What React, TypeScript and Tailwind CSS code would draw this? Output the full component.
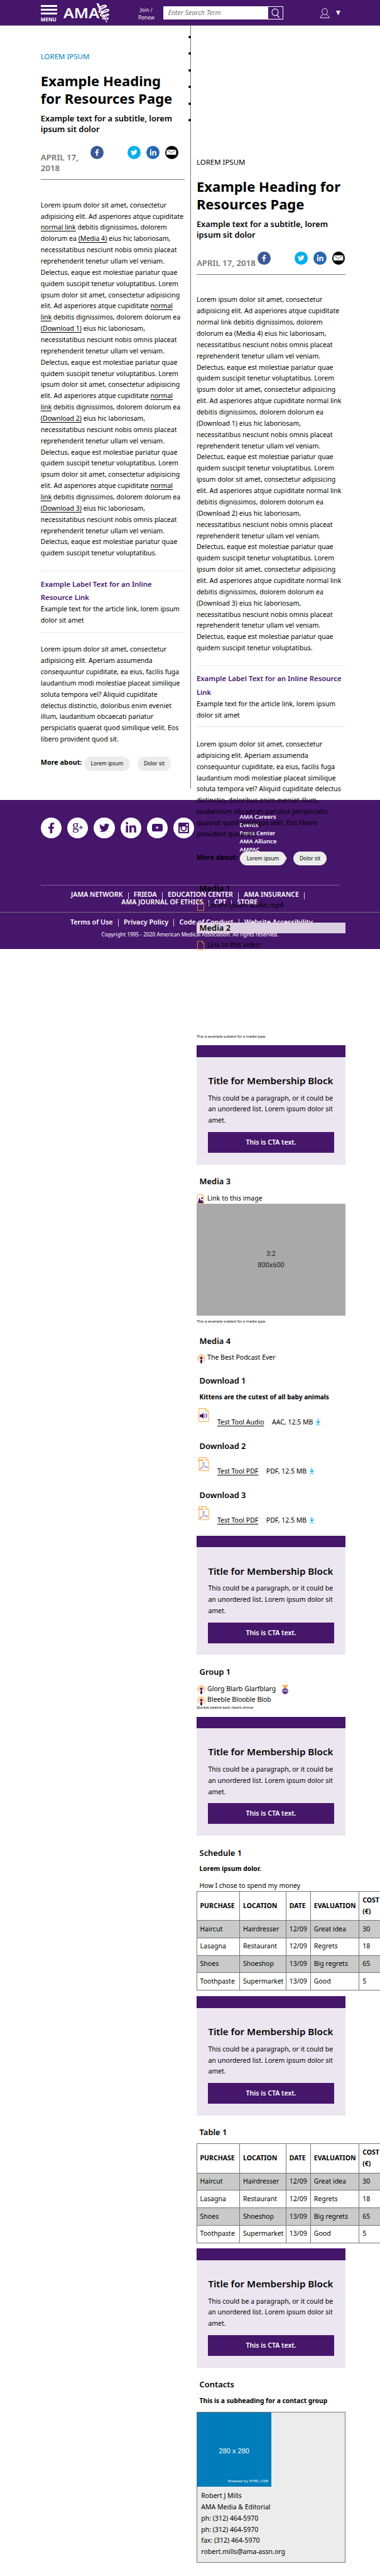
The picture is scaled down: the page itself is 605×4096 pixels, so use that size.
import React from "react";
import { FaFacebookF, FaTwitter, FaLinkedinIn } from "react-icons/fa";

const SHARED = [
  "necessitatibus nesciunt nobis omnis placeat",
  "reprehenderit tenetur ullam vel veniam.",
  "Delectus, eaque est molestiae pariatur quae",
];

function Link({ children }: { children: React.ReactNode }) {
  return <a className="underline decoration-1 underline-offset-[1.5px]">{children}</a>;
}

const LEFT_BODY: React.ReactNode[] = [
  "Lorem ipsum dolor sit amet, consectetur",
  "adipisicing elit. Ad asperiores atque cupiditate",
  <><Link>normal link</Link> debitis dignissimos, dolorem</>,
  <>dolorum ea <Link>(Media 4)</Link> eius hic laboriosam,</>,
  ...SHARED,
  "quidem suscipit tenetur voluptatibus. Lorem",
  ...[1, 2, 3].flatMap((n) => [
    "ipsum dolor sit amet, consectetur adipisicing",
    <>elit. Ad asperiores atque cupiditate <Link>normal</Link></>,
    <><Link>link</Link> debitis dignissimos, dolorem dolorum ea</>,
    <><Link>(Download {n})</Link> eius hic laboriosam,</>,
    ...SHARED,
    n < 3 ? "quidem suscipit tenetur voluptatibus. Lorem" : "quidem suscipit tenetur voluptatibus.",
  ]),
];

const RIGHT_BODY: React.ReactNode[] = [
  "Lorem ipsum dolor sit amet, consectetur",
  "adipisicing elit. Ad asperiores atque cupiditate",
  "normal link debitis dignissimos, dolorem",
  "dolorum ea (Media 4) eius hic laboriosam,",
  ...SHARED,
  "quidem suscipit tenetur voluptatibus. Lorem",
  ...[1, 2, 3].flatMap((n) => [
    "ipsum dolor sit amet, consectetur adipisicing",
    "elit. Ad asperiores atque cupiditate normal link",
    "debitis dignissimos, dolorem dolorum ea",
    `(Download ${n}) eius hic laboriosam,`,
    ...SHARED,
    n < 3 ? "quidem suscipit tenetur voluptatibus. Lorem" : "quidem suscipit tenetur voluptatibus.",
  ]),
];

const LEFT_OUTRO = [
  "Lorem ipsum dolor sit amet, consectetur",
  "adipisicing elit. Aperiam assumenda",
  "consequuntur cupiditate, ea eius, facilis fuga",
  "laudantium modi molestiae placeat similique",
  "soluta tempora vel? Aliquid cupiditate",
  "delectus distinctio, doloribus enim eveniet",
  "illum, laudantium obcaecati pariatur",
  "perspiciatis quaerat quod similique velit. Eos",
  "libero provident quod sit.",
];

const RIGHT_OUTRO = [
  "Lorem ipsum dolor sit amet, consectetur",
  "adipisicing elit. Aperiam assumenda",
  "consequuntur cupiditate, ea eius, facilis fuga",
  "laudantium modi molestiae placeat similique",
  "soluta tempora vel? Aliquid cupiditate delectus",
  "distinctio, doloribus enim eveniet illum,",
  "laudantium obcaecati pariatur perspiciatis",
  "quaerat quod similique velit. Eos libero",
  "provident quod sit.",
];

function Lines({ items }: { items: React.ReactNode[] }) {
  return (
    <>
      {items.map((line, i) => (
        <span key={i} className="block whitespace-nowrap">{line}</span>
      ))}
    </>
  );
}

function Header() {
  return (
    <header className="flex h-[40.5px] items-start border-b border-[#767676] bg-[#46166b] pl-[64.8px] text-white">
      <div className="w-[26.2px] pt-[8px]">
        <div className="h-[2.7px] bg-white" />
        <div className="mt-[3.3px] h-[2.7px] bg-white" />
        <div className="mt-[3.3px] h-[2.7px] bg-white" />
        <div className="mt-[2.4px] text-[8.1px] leading-[11px] font-bold">MENU</div>
      </div>
      <svg className="ml-[10px] mt-[5px] h-[31px] w-[74px] shrink-0" viewBox="0 0 74 31">
        <text x="0" y="23.7" textLength="57" lengthAdjust="spacingAndGlyphs" fill="#fff" fontFamily="Noto Sans" fontWeight="600" fontSize="21.4">AMA</text>
        <g fill="none" stroke="#fff" strokeLinecap="round">
          <path d="M53 0.6 H56 L58.6 7 L57 9.5 Z" fill="#fff" strokeWidth="0.5" />
          <path d="M59.5 11 L69 30.5" strokeWidth="1.1" />
          <path d="M57.5 8.6 C59.5 4.5 65 2.6 68 4.2 C69.5 6 62 7.2 58 10.6 C54.8 14 58 15.8 62 13.4" strokeWidth="2.1" />
          <path d="M62 13.4 C66 10.6 70.5 9.2 72.2 10.8 C72.8 13.2 65 13.6 60.3 17 C57.3 20 61 21.6 65 19.6" strokeWidth="2" />
          <path d="M65 19.6 C69 17.2 72.4 16.6 72 18.4 C70.8 20.6 65 20.4 62.6 23 C61.6 25.6 65 25.6 68 23.8 C71 22.6 72.2 24 69.6 26.2" strokeWidth="1.6" />
        </g>
      </svg>
      <div className="ml-[44px] w-[28px] pt-[10.4px] text-center text-[8.3px] leading-[12.1px] text-white/95">
        <div className="whitespace-nowrap">Join /</div>
        <div className="whitespace-nowrap">Renew</div>
      </div>
      <div className="ml-[13.5px] mt-[10px] flex h-[21px] w-[191px] bg-white">
        <div className="flex-1 pl-[7px] text-[10.5px] leading-[21px] whitespace-nowrap text-[#767676] italic">Enter Search Term</div>
        <div className="my-[1.2px] mr-[1.2px] flex w-[23.2px] items-center justify-center bg-[#46166b]">
          <svg className="h-[16px] w-[16px]" viewBox="0 0 16 16" fill="none" stroke="#fff">
            <ellipse cx="7" cy="6.5" rx="5" ry="5.4" strokeWidth="1.1" />
            <path d="M10 11 L13.8 15.4" strokeWidth="1.2" />
          </svg>
        </div>
      </div>
      <svg className="ml-[57.5px] mt-[12.8px] h-[16px] w-[16px]" viewBox="0 0 16 16" fill="none" stroke="#fff" strokeWidth="0.9">
        <ellipse cx="8" cy="5.4" rx="4.3" ry="4.9" />
        <path d="M5.6 10.2 C3.2 11 1.2 12.4 1 15.3 H15 C14.8 12.4 12.8 11 10.4 10.2" />
      </svg>
      <svg className="ml-[10px] mt-[16.8px] h-[7.4px] w-[7px]" viewBox="0 0 7 7.4"><path d="M0 0 H7 L3.5 7.4 Z" fill="#fff" /></svg>
    </header>
  );
}

function ShareIcons() {
  const dot = "flex h-[20.8px] w-[20.8px] shrink-0 items-center justify-center rounded-full text-white";
  return (
    <div className="flex">
      <span className={`${dot} bg-[#3b5998]`}><FaFacebookF size={10.8} /></span>
      <span className={`${dot} ml-[38.7px] bg-[#00aeef]`}><FaTwitter size={10.8} /></span>
      <span className={`${dot} ml-[8.9px] bg-[#2867b2]`}><FaLinkedinIn size={11.6} /></span>
      <span className={`${dot} ml-[8.9px] bg-black`}>
        <svg className="h-[8.2px] w-[15.4px]" viewBox="0 0 15.4 8.2">
          <rect width="15.4" height="8.2" fill="#fff" />
          <path d="M0.4 0.5 L7.7 4.9 L15 0.5" fill="none" stroke="#000" strokeWidth="0.7" />
        </svg>
      </span>
    </div>
  );
}

type ArticleProps = {
  eyebrowClass: string;
  heading: string[];
  date: string[];
  dateClass: string;
  body: React.ReactNode[];
  label: string[];
  outro: string[];
};

function Article({ eyebrowClass, heading, date, dateClass, body, label, outro }: ArticleProps) {
  return (
    <article className="text-[10.53px] leading-[17.865px]">
      <p className={`text-[11.48px] leading-[16px] ${eyebrowClass}`}>LOREM IPSUM</p>
      <h1 className="mt-[17.2px] text-[22.05px] leading-[27.75px] font-bold"><Lines items={heading} /></h1>
      <p className="mt-[9.1px] text-[12.89px] leading-[17.2px] font-semibold">
        <Lines items={["Example text for a subtitle, lorem", "ipsum sit dolor"]} />
      </p>
      <div className="mt-[17.8px] flex">
        <div className={`shrink-0 pt-[9.6px] text-[13.28px] leading-[17.3px] font-semibold text-[#767676] ${dateClass}`}>
          <Lines items={date} />
        </div>
        <ShareIcons />
      </div>
      <div className="mt-[8.9px] h-px bg-[#767676]" />
      <p className="mt-[31.6px]"><Lines items={body} /></p>
      <div className="mt-[18.1px] h-px bg-[#e8e8e8]" />
      <h3 className="mt-[9.3px] text-[11.39px] leading-[21.2px] font-semibold text-[#46166b]"><Lines items={label} /></h3>
      <p><Lines items={["Example text for the article link, lorem ipsum", "dolor sit amet"]} /></p>
      <div className="mt-[8.9px] h-px bg-[#e8e8e8]" />
      <p className="mt-[18.7px]"><Lines items={outro} /></p>
      <div className="mt-[18.2px] flex h-[22.4px]">
        <span className="w-[69.3px] text-[10.8px] font-bold whitespace-nowrap">More about:</span>
        <span className="w-[72.6px] rounded-full bg-[#ececec] text-center text-[8.36px] leading-[22.4px]">Lorem ipsum</span>
        <span className="ml-[12px] w-[53.6px] rounded-full bg-[#ececec] text-center text-[8.36px] leading-[22.4px]">Dolor sit</span>
      </div>
    </article>
  );
}

function Piped({ items, trailing }: { items: string[]; trailing?: boolean }) {
  return (
    <>
      {items.map((t, i) => (
        <React.Fragment key={t}>
          <span className="whitespace-nowrap">{t}</span>
          {(i < items.length - 1 || trailing) && <span className="mx-[8.2px] mt-[1.6px] h-[11.6px] w-px shrink-0 bg-white/80" />}
        </React.Fragment>
      ))}
    </>
  );
}

function Footer() {
  const disc = "flex h-[33.2px] w-[33.2px] shrink-0 items-center justify-center rounded-full bg-white";
  return (
    <footer className="mt-[18.6px] h-[237px] bg-[#46166b] pt-[19.5px] text-white">
      <div className="flex h-[78.6px] pl-[64.8px]">
        <div className="flex w-[316.8px] gap-[9.1px] pt-[8px] text-[#46166b]">
          <span className={disc}><FaFacebookF size={17.2} /></span>
          <span className={disc}>
            <svg className="h-[20px] w-[20px]" viewBox="0 0 20 20" fill="#46166b">
              <text x="1" y="13.2" fontFamily="Liberation Serif" fontSize="21">g</text>
              <path d="M11.8 9.6 H18 M14.9 6.4 V12.8" stroke="#46166b" strokeWidth="1.2" />
            </svg>
          </span>
          <span className={disc}><FaTwitter size={16.4} /></span>
          <span className={disc}><FaLinkedinIn size={19} /></span>
          <span className={disc}>
            <svg className="h-[12px] w-[17px]" viewBox="0 0 17 12">
              <rect width="17" height="12" rx="2.6" fill="#46166b" />
              <path d="M6.8 3.6 L11 5.9 L6.8 8.2 Z" fill="#fff" />
            </svg>
          </span>
          <span className={disc}>
            <svg className="h-[17px] w-[17px]" viewBox="0 0 17 17">
              <rect width="17" height="17" rx="1.6" fill="#46166b" />
              <path d="M2.2 7 H14.8 V14.8 H2.2 Z" fill="#fff" />
              <rect x="12.4" y="2.4" width="2.8" height="2.8" fill="#fff" />
              <circle cx="8.5" cy="8.9" r="5" fill="#46166b" />
              <circle cx="8.5" cy="8.9" r="3" fill="#fff" />
            </svg>
          </span>
        </div>
        <div className="text-[9.24px] leading-[13.1px] font-semibold">
          <Lines items={["AMA Careers", "Events", "Press Center", "AMA Alliance", "AMPAC", "AMA Foundation"]} />
        </div>
      </div>
      <div className="mt-[36.9px] ml-[64.8px] h-px w-[476.2px] bg-[#80609a]" />
      <nav className="mt-[8.8px] text-[10.58px] leading-[11.8px] font-semibold">
        <div className="flex h-[11.8px] pl-[113px]"><Piped items={["JAMA NETWORK", "FRIEDA", "EDUCATION CENTER", "AMA INSURANCE"]} trailing /></div>
        <div className="flex h-[11.8px] pl-[193.3px]"><Piped items={["AMA JOURNAL OF ETHICS", "CPT", "STORE"]} /></div>
      </nav>
      <div className="mt-[9.5px] h-px bg-[#767676]" />
      <div className="mt-[8.6px] flex h-[12px] pl-[111.9px] text-[10.74px] leading-[12px] font-semibold">
        <Piped items={["Terms of Use", "Privacy Policy", "Code of Conduct", "Website Accessibility"]} />
      </div>
      <p className="mt-[8.4px] text-center text-[8.33px] leading-[12px] whitespace-nowrap">
        Copyright 1995 - 2020 American Medical Association. All rights reserved.
      </p>
    </footer>
  );
}

function MembershipBlock() {
  return (
    <section className="h-[189.3px] bg-[#ece6f1]">
      <div className="h-[18.3px] bg-[#46166b]" />
      <div className="px-[18.5px] pt-[27.2px]">
        <h2 className="text-[15.16px] leading-[20px] font-semibold whitespace-nowrap">Title for Membership Block</h2>
        <p className="mt-[9.8px]">
          <Lines items={["This could be a paragraph, or it could be", "an unordered list. Lorem ipsum dolor sit", "amet."]} />
        </p>
        <button className="mt-[8.8px] block h-[32.9px] w-full bg-[#46166b] text-center text-[10.58px] leading-[32.9px] font-semibold text-white">This is CTA text.</button>
      </div>
    </section>
  );
}

function Title({ children }: { children: React.ReactNode }) {
  return <h2 className="mt-[18.6px] pl-[4.7px] text-[12.89px] leading-[17.3px] font-semibold whitespace-nowrap">{children}</h2>;
}

function Subtext({ children }: { children: React.ReactNode }) {
  return <p className="text-[5.79px] leading-[9px] whitespace-nowrap">{children}</p>;
}

function FileIcon() {
  return (
    <svg className="h-[15px] w-[11px]" viewBox="0 0 11 15" fill="none" stroke="#f9a133" strokeWidth="0.8">
      <path d="M0.5 0.5 H8 L10.5 3.3 V14.5 H0.5 Z M8 0.5 V3.3 H10.5" />
    </svg>
  );
}

function ImageIcon() {
  return (
    <svg className="h-[15px] w-[11px]" viewBox="0 0 11 15">
      <path d="M0.5 0.5 H8 L10.5 3.3 V14.5 H0.5 Z M8 0.5 V3.3 H10.5" fill="#fff" stroke="#f9a133" strokeWidth="0.8" />
      <path d="M1 14 L3.3 5 L5.8 10.5 L7.9 8.6 L10 14 Z" fill="#46166b" />
      <circle cx="7.6" cy="6" r="1.5" fill="#46166b" />
    </svg>
  );
}

function PodcastIcon() {
  return (
    <svg className="h-[15px] w-[13px]" viewBox="0 0 13 15">
      <g fill="none" stroke="#f9a133" strokeWidth="1">
        <path d="M4 12.4 A6 6 0 1 1 9 12.4" />
        <path d="M4.2 9.6 A3.8 3.8 0 1 1 8.8 9.6" />
      </g>
      <circle cx="6.5" cy="6.3" r="2.1" fill="#46166b" />
      <rect x="5" y="8.8" width="3" height="6.2" rx="1.4" fill="#46166b" />
    </svg>
  );
}

function MedalIcon() {
  return (
    <svg className="h-[15px] w-[10px]" viewBox="0 0 10 15">
      <path d="M0.5 0 H3.6 L5 2 L6.4 0 H9.5 L6.6 5 H3.4 Z" fill="#f9a133" />
      <circle cx="5" cy="10" r="4.8" fill="#46166b" />
      <circle cx="5" cy="10" r="3.9" fill="none" stroke="#fff" strokeWidth="0.4" />
      <text x="5" y="11" textAnchor="middle" fontSize="2.8" fontWeight="700" fontFamily="Noto Sans" fill="#fff">CME</text>
    </svg>
  );
}

function AssetRow({ icon, children }: { icon: React.ReactNode; children: React.ReactNode }) {
  return (
    <div className="flex h-[17.865px]">
      <span className="flex w-[17.2px] justify-start pt-[2.2px] pl-[1.6px]">{icon}</span>
      <span className="whitespace-nowrap">{children}</span>
    </div>
  );
}

function AudioFile() {
  return (
    <svg className="h-[22px] w-[17px]" viewBox="0 0 17 22">
      <path d="M0.7 0.5 H11.6 L16 5 V21.4 H0.7 Z M11.6 0.5 V5 H16" fill="none" stroke="#f9a133" strokeWidth="0.9" />
      <path d="M2 10.2 H4.6 L8 7.6 V16.8 L4.6 14.2 H2 Z" fill="#46166b" />
      <path d="M9.3 9.8 Q10.8 12.2 9.3 14.6 M11.6 8.2 Q14.8 12.2 11.6 16.2" fill="none" stroke="#46166b" strokeWidth="1.1" />
    </svg>
  );
}

function PdfFile() {
  return (
    <svg className="h-[22px] w-[17px]" viewBox="0 0 17 22">
      <path d="M0.9 0.5 H11.8 L16.2 5 V21.4 H0.9 Z M11.8 0.5 V5 H16.2" fill="none" stroke="#f9a133" strokeWidth="0.9" />
      <rect x="0" y="2.9" width="7.2" height="3" fill="#f9a133" />
      <text x="3.6" y="5.3" textAnchor="middle" fontSize="2.6" fontWeight="700" fontFamily="Noto Sans" fill="#fff">PDF</text>
      <g fill="none" stroke="#6b4589" strokeWidth="0.6">
        <ellipse cx="8" cy="9" rx="1.1" ry="1.5" />
        <path d="M8.1 10.5 C8.6 13.6 10.6 15.4 12.4 16.2 M7.9 10.5 C7.6 13.4 6.2 15.8 4.6 17.6 M4.8 17.2 C7 15.8 10 15.2 12.4 15.4" />
        <ellipse cx="3.4" cy="18.4" rx="1.5" ry="0.8" transform="rotate(-40 3.4 18.4)" />
        <ellipse cx="13.5" cy="16" rx="1.4" ry="0.8" transform="rotate(15 13.5 16)" />
      </g>
    </svg>
  );
}

function DownloadRow({ icon, name, meta }: { icon: React.ReactNode; name: string; meta: string }) {
  return (
    <div className="flex h-[31.7px] pl-[2.7px]">
      <span className="w-[30.3px]">{icon}</span>
      <span className="pt-[13.8px] whitespace-nowrap underline decoration-1 underline-offset-[1.5px]">{name}</span>
      <span className="pt-[13.8px] pl-[12.5px] whitespace-nowrap">{meta}</span>
      <svg className="ml-[4.8px] mt-[16.6px] h-[10.2px] w-[7px]" viewBox="0 0 7 10.2" fill="none" stroke="#00aeef">
        <path d="M3.5 0 V7 M0.5 4 L3.5 7.1 L6.5 4" strokeWidth="1.3" />
        <path d="M0 9.6 H7" strokeWidth="0.8" />
      </svg>
    </div>
  );
}

const ROWS = [
  ["Haircut", "Hairdresser", "12/09", "Great idea", "30"],
  ["Lasagna", "Restaurant", "12/09", "Regrets", "18"],
  ["Shoes", "Shoeshop", "13/09", "Big regrets", "65"],
  ["Toothpaste", "Supermarket", "13/09", "Good", "5"],
];

function SpendTable() {
  const cell = "border border-[#767676] py-0 pl-[4.7px] text-left";
  return (
    <table className="w-[306px] table-fixed border-collapse">
      <colgroup>
        <col className="w-[68.4px]" />
        <col className="w-[73.8px]" />
        <col className="w-[39px]" />
        <col className="w-[77.4px]" />
        <col className="w-[47.4px]" />
      </colgroup>
      <thead>
        <tr className="h-[46.1px]">
          {["PURCHASE", "LOCATION", "DATE", "EVALUATION"].map((h) => (
            <th key={h} className={`${cell} font-bold whitespace-nowrap`}>{h}</th>
          ))}
          <th className={`${cell} font-bold`}>COST<br />(€)</th>
        </tr>
      </thead>
      <tbody>
        {ROWS.map((row, i) => (
          <tr key={i} className={`h-[27.8px] ${i % 2 === 0 ? "bg-[#cacaca]" : "bg-white"}`}>
            {row.map((c, j) => <td key={j} className={`${cell} whitespace-nowrap`}>{c}</td>)}
          </tr>
        ))}
      </tbody>
    </table>
  );
}

export default function App() {
  return (
    <div className="grid h-[4096px] w-[605px] grid-cols-[605px] overflow-hidden bg-white font-['Noto_Sans','Open_Sans',sans-serif] text-[10.53px] leading-[17.865px] text-black">
      <div className="col-start-1 row-start-1">
        <Header />
        <div className="relative h-[1213.3px] w-[303.7px] border-r border-[#767676] pt-[41.5px] pr-[9.1px] pl-[64.8px]">
          <Article
            eyebrowClass="text-[#007dba]"
            heading={["Example Heading", "for Resources Page"]}
            date={["APRIL 17,", "2018"]}
            dateClass="w-[79.1px]"
            body={LEFT_BODY}
            label={["Example Label Text for an Inline", "Resource Link"]}
            outro={LEFT_OUTRO}
          />
          <div className="absolute top-[16.4px] right-[-1px] flex flex-col gap-[22.5px]">
            {[0, 1, 2, 3, 4, 5].map((i) => <span key={i} className="h-[4px] w-[4px] rounded-full bg-black" />)}
          </div>
        </div>
        <Footer />
      </div>

      <main className="relative col-start-1 row-start-1 ml-[312.9px] w-[237.3px] pt-[250.1px]">
        <Article
          eyebrowClass="text-black"
          heading={["Example Heading for", "Resources Page"]}
          date={["APRIL 17, 2018"]}
          dateClass="w-[96.9px]"
          body={RIGHT_BODY}
          label={["Example Label Text for an Inline Resource", "Link"]}
          outro={RIGHT_OUTRO}
        />

        <div className="pt-[9.5px]"><Title>Media 1</Title></div>
        <div className="mt-[9.3px]"><AssetRow icon={<FileIcon />}>Lorem ipsum audio.mp4</AssetRow></div>
        <h2 className="mt-[18.2px] bg-[#dbcfe1] pl-[4.7px] text-[12.89px] leading-[17.2px] font-semibold">Media 2</h2>
        <div className="mt-[9.8px]"><AssetRow icon={<FileIcon />}>Link to this video</AssetRow></div>
        <div className="mt-[132.2px]"><Subtext>This is example subtext for a media type.</Subtext></div>
        <div className="mt-[9.1px]"><MembershipBlock /></div>

        <Title>Media 3</Title>
        <div className="mt-[9.3px]"><AssetRow icon={<ImageIcon />}>Link to this image</AssetRow></div>
        <div className="mt-[-0.5px] flex h-[178.2px] flex-col items-center justify-center bg-[#a9a9a9] font-['Roboto',sans-serif] text-[11px] leading-[18px] text-[#222]">
          <span>3:2</span>
          <span>800x600</span>
        </div>
        <div className="mt-[4.3px]"><Subtext>This is example subtext for a media type.</Subtext></div>

        <Title>Media 4</Title>
        <div className="mt-[8.9px]"><AssetRow icon={<PodcastIcon />}>The Best Podcast Ever</AssetRow></div>

        <Title>Download 1</Title>
        <p className="mt-[8.8px] pl-[4.7px] text-[10.14px] font-bold whitespace-nowrap">Kittens are the cutest of all baby animals</p>
        <div className="mt-[8.2px]"><DownloadRow icon={<AudioFile />} name="Test Tool Audio" meta="AAC, 12.5 MB" /></div>
        <div className="h-[1.4px]" />
        <Title>Download 2</Title>
        <div className="mt-[9.1px]"><DownloadRow icon={<PdfFile />} name="Test Tool PDF" meta="PDF, 12.5 MB" /></div>
        <div className="h-[1.4px]" />
        <Title>Download 3</Title>
        <div className="mt-[9.1px]"><DownloadRow icon={<PdfFile />} name="Test Tool PDF" meta="PDF, 12.5 MB" /></div>
        <div className="mt-[15.4px]"><MembershipBlock /></div>

        <Title>Group 1</Title>
        <div className="mt-[9.3px]">
          <div className="flex">
            <AssetRow icon={<PodcastIcon />}>Glorg Blarb Glarfblarg</AssetRow>
            <span className="pt-[2.2px] pl-[9.5px]"><MedalIcon /></span>
          </div>
          <AssetRow icon={<PodcastIcon />}>Bleeble Blooble Blob</AssetRow>
        </div>
        <div className="mt-[-0.9px]"><Subtext>Glorble beeble barb nbarb shmar</Subtext></div>
        <div className="mt-[9.2px]"><MembershipBlock /></div>

        <Title>Schedule 1</Title>
        <p className="mt-[8.5px] pl-[4.7px] text-[10.3px] font-bold">Lorem ipsum dolor.</p>
        <p className="mt-[8.8px] pl-[4.7px]">How I chose to spend my money</p>
        <div className="mt-[-0.9px] h-[158.3px]"><SpendTable /></div>
        <div className="mt-[9.2px]"><MembershipBlock /></div>

        <Title>Table 1</Title>
        <div className="mt-[8.8px] h-[157.5px]"><SpendTable /></div>
        <div className="mt-[9.3px]"><MembershipBlock /></div>

        <Title>Contacts</Title>
        <p className="mt-[8.4px] pl-[4.7px] text-[10.24px] font-bold whitespace-nowrap">This is a subheading for a contact group</p>
        <div className="mt-[8.1px] h-[240px] border border-[#767676] bg-[#ececec]">
          <div className="flex h-[118px] w-[117.7px] flex-col items-center bg-[#007dba] font-['Liberation_Sans',sans-serif] text-white">
            <span className="pt-[54px] text-[11px] leading-[14px]">280 x 280</span>
            <span className="mt-[37px] mr-[4.6px] self-end font-['DejaVu_Sans',sans-serif] text-[5.4px] leading-[9px] tracking-[0.1px] whitespace-nowrap">Powered by HTML.COM</span>
          </div>
          <p className="pt-[6.3px] pl-[6.4px]">
            <Lines items={["Robert J Mills", "AMA Media & Editorial", "ph: (312) 464-5970", "ph: (312) 464-5970", "fax: (312) 464-5970", "robert.mills@ama-assn.org"]} />
          </p>
        </div>
      </main>
    </div>
  );
}
